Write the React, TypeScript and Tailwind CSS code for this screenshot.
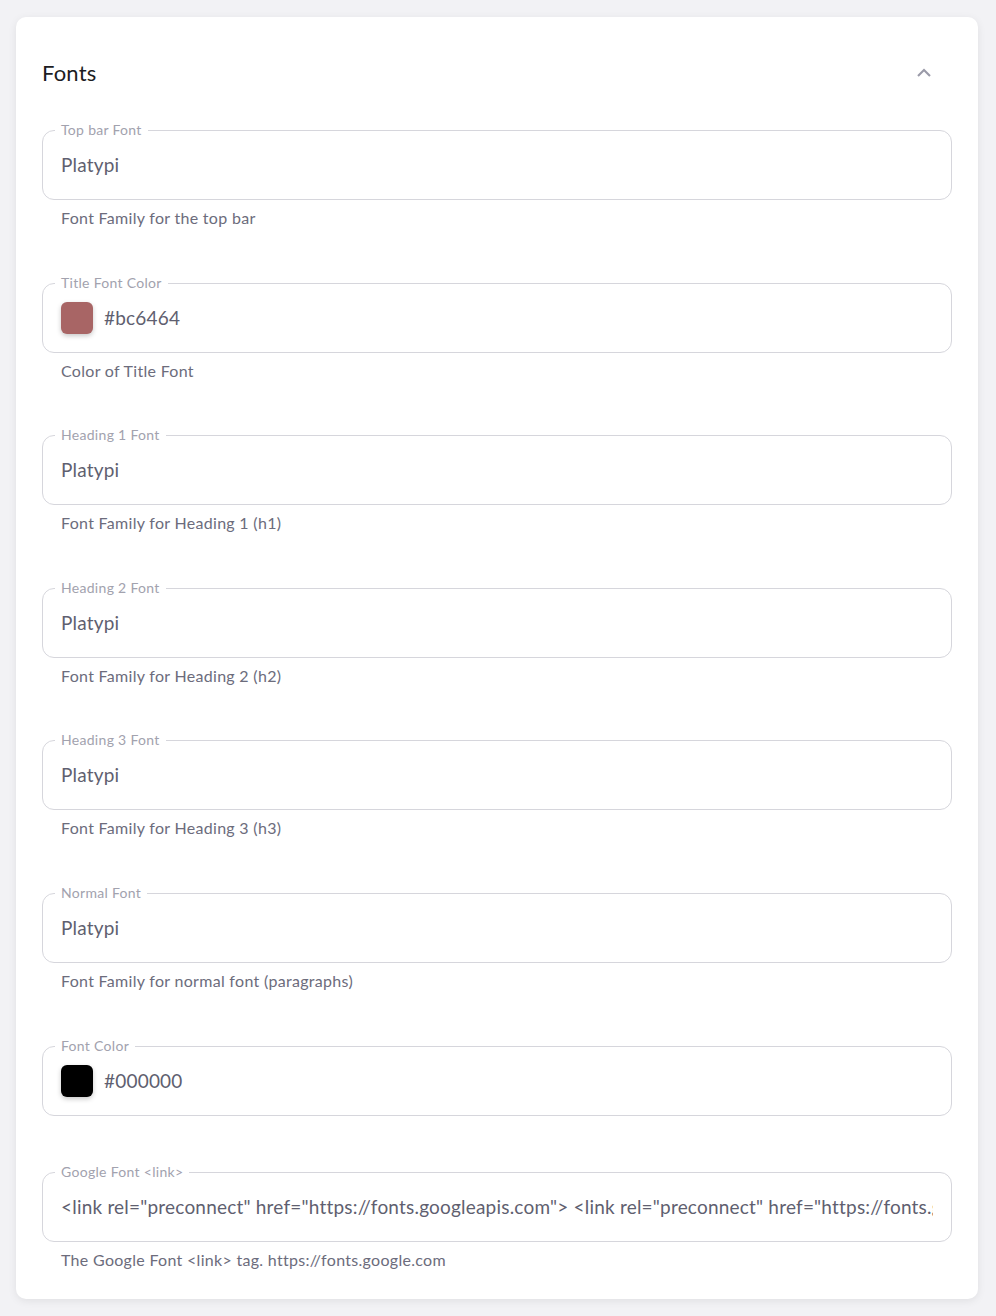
import React from 'react';

type Field = {
  label: string;
  value: string;
  helper?: string;
  color?: string;
  gap: string;
};

const fields: Field[] = [
  { label: 'Top bar Font', value: 'Platypi', helper: 'Font Family for the top bar', gap: 'mb-[45px]' },
  { label: 'Title Font Color', value: '#bc6464', helper: 'Color of Title Font', color: '#a86565', gap: 'mb-[44px]' },
  { label: 'Heading 1 Font', value: 'Platypi', helper: 'Font Family for Heading 1 (h1)', gap: 'mb-[45px]' },
  { label: 'Heading 2 Font', value: 'Platypi', helper: 'Font Family for Heading 2 (h2)', gap: 'mb-[44px]' },
  { label: 'Heading 3 Font', value: 'Platypi', helper: 'Font Family for Heading 3 (h3)', gap: 'mb-[45px]' },
  { label: 'Normal Font', value: 'Platypi', helper: 'Font Family for normal font (paragraphs)', gap: 'mb-[45px]' },
  { label: 'Font Color', value: '#000000', color: '#000000', gap: 'mb-[48px]' },
  {
    label: 'Google Font <link>',
    value:
      '<link rel="preconnect" href="https://fonts.googleapis.com"> <link rel="preconnect" href="https://fonts.gstatic.com" crossorigin> <link href="https://fonts.googleapis.com/css2?family=Platypi&display=swap" rel="stylesheet">',
    helper: 'The Google Font <link> tag. https://fonts.google.com',
    gap: 'mb-0',
  },
];

const OutlinedField: React.FC<{ field: Field }> = ({ field }) => (
  <div className={field.gap}>
    <fieldset className="border border-[#d6d6dc] rounded-[12px] min-w-0">
      <legend className="ml-[12px] px-[6px] text-[14px] leading-[16px] tracking-[0.3px] text-[#a2a2ae]">
        {field.label}
      </legend>
      <div className={`h-[61px] px-[18px] flex items-start ${field.color ? 'pt-[11px]' : 'pt-[15px]'}`}>
        {field.color && (
          <span
            className="w-[32px] h-[32px] rounded-[6px] shadow-[0_2px_5px_rgba(0,0,0,0.22)] mr-[11px] shrink-0"
            style={{ backgroundColor: field.color }}
          />
        )}
        <input
          readOnly
          value={field.value}
          className={`w-full min-w-0 bg-transparent outline-none text-[19px] leading-[24px] h-[24px] tracking-[0.2px] text-[#5f5f70] ${
            field.color ? 'mt-[4px]' : ''
          }`}
        />
      </div>
    </fieldset>
    {field.helper && (
      <p className="mt-[6px] pl-[19px] text-[16px] leading-[24px] tracking-[0.3px] text-[#6c6c7c]">{field.helper}</p>
    )}
  </div>
);

export default function App() {
  return (
    <div
      className="min-h-[1316px] bg-[#f2f2f5] pt-[17px] pb-[18px] pl-4"
      style={{ fontFamily: 'Lato, "Noto Sans", sans-serif' }}
    >
      <div className="w-[962px] bg-white rounded-[10px] shadow-[0_2px_8px_rgba(0,0,0,0.08)] px-[26px] pt-[40px] pb-[27px]">
        <div className="flex items-center justify-between h-[32px] mb-[33px]">
          <h2 className="text-[22px] leading-[32px] tracking-[0.2px] text-[#1c1c22]">Fonts</h2>
          <svg width="18" height="18" viewBox="0 0 24 24" fill="none" className="mr-[19px] text-[#9a9aa8]">
            <path d="M5 15l7-7 7 7" stroke="currentColor" strokeWidth="2.8" strokeLinecap="square" />
          </svg>
        </div>
        <div>
          {fields.map(f => (
            <OutlinedField key={f.label} field={f} />
          ))}
        </div>
      </div>
    </div>
  );
}
